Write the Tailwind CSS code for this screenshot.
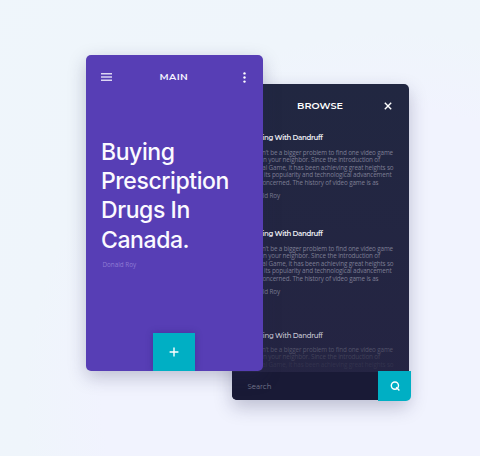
<!DOCTYPE html>
<html lang="en">
<head>
<meta charset="utf-8">
<title>Reader</title>
<script src="https://cdn.jsdelivr.net/npm/@tailwindcss/browser@4"></script>
</head>
<body class="relative w-[480px] h-[456px] overflow-hidden bg-[radial-gradient(circle_at_82%_88%,#f1f3fe_0px,#f1f3fe_290px,#eff5fb_370px,#eff6fb_600px)] font-['Montserrat','Inter',sans-serif]">

<!-- Browse screen -->
<section class="absolute left-[232px] top-[84px] w-[177px] h-[316px] rounded-[5px] bg-linear-to-b from-[#212741] to-[#252443] shadow-[0_7px_18px_rgba(40,40,80,0.26)] flex flex-col">
  <header class="flex items-center justify-between h-[43px] pl-[65px] pr-[17px]">
    <h2 class="pt-px text-[9.6px] leading-none font-semibold tracking-[0.1px] text-white whitespace-nowrap">BROWSE</h2>
    <svg class="size-[8px]" viewBox="0 0 8 8" fill="none" stroke="#fff" stroke-width="1.4"><path d="M.8 .8l6.4 6.4M7.2 .8L.8 7.2"/></svg>
  </header>
  <div class="relative h-[245px] overflow-hidden whitespace-nowrap">
    <article class="h-[96px] pt-[6px]">
      <h3 class="w-[90.5px] flex justify-end text-[7px] leading-[10px] font-semibold text-[#eeeef5] tracking-[-0.33px]">Dealing With Dandruff</h3>
      <div class="pt-[5.5px] text-[6.3px] leading-[7.65px] text-[#7d7e94] tracking-[-0.13px] font-['Open_Sans',sans-serif]">
        <p class="w-[161px] flex justify-end">can’t be a bigger problem to find one video game</p>
        <p class="w-[148px] flex justify-end">in your neighbor. Since the introduction of</p>
        <p class="w-[161.5px] flex justify-end">ital Game, it has been achieving great heights so</p>
        <p class="w-[159.5px] flex justify-end">as its popularity and technological advancement</p>
        <p class="w-[146.5px] flex justify-end">concerned. The history of video game is as</p>
        <p class="w-[48px] flex justify-end pt-[5.5px]">Donald Roy</p>
      </div>
    </article>
    <article class="h-[102.5px] pt-[6px]">
      <h3 class="w-[90.5px] flex justify-end text-[7px] leading-[10px] font-semibold text-[#eeeef5] tracking-[-0.33px]">Dealing With Dandruff</h3>
      <div class="pt-[5.5px] text-[6.3px] leading-[7.65px] text-[#7d7e94] tracking-[-0.13px] font-['Open_Sans',sans-serif]">
        <p class="w-[161px] flex justify-end">can’t be a bigger problem to find one video game</p>
        <p class="w-[148px] flex justify-end">in your neighbor. Since the introduction of</p>
        <p class="w-[161.5px] flex justify-end">ital Game, it has been achieving great heights so</p>
        <p class="w-[159.5px] flex justify-end">as its popularity and technological advancement</p>
        <p class="w-[146.5px] flex justify-end">concerned. The history of video game is as</p>
        <p class="w-[48px] flex justify-end pt-[5.5px]">Donald Roy</p>
      </div>
    </article>
    <article class="pt-[5px]">
      <h3 class="w-[90.5px] flex justify-end text-[7px] leading-[10px] font-medium text-[#c9c9d5] tracking-[-0.3px]">Dealing With Dandruff</h3>
      <div class="pt-[5px] text-[6.3px] leading-[7.65px] tracking-[-0.13px] font-['Open_Sans',sans-serif]">
        <p class="w-[161px] flex justify-end text-[#525269]">can’t be a bigger problem to find one video game</p>
        <p class="w-[148px] flex justify-end text-[#414159]">in your neighbor. Since the introduction of</p>
        <p class="w-[161.5px] flex justify-end text-[#33334e]">ital Game, it has been achieving great heights so</p>
      </div>
    </article>
  </div>
  <footer class="h-[28px] flex items-center pl-[15.5px] rounded-b-[5px] bg-[#191a36]">
    <span class="text-[7px] leading-none text-[#7b7c93]">Search</span>
  </footer>
  <button class="absolute left-[146px] top-[286.5px] w-[33px] h-[30.5px] rounded-br-[5px] bg-[#00afc4] flex items-center justify-center">
    <svg class="size-[10px]" viewBox="0 0 10 10" fill="none" stroke="#fff" stroke-width="1.4"><circle cx="4.9" cy="4.6" r="3.6"/><path d="M6.2 6.2L9.4 9.4"/></svg>
  </button>
</section>

<!-- Main screen -->
<section class="absolute left-[85.5px] top-[55px] w-[177px] h-[315.5px] rounded-[5px] overflow-hidden bg-[#573eb5] flex flex-col">
  <header class="grid grid-cols-[59px_1fr_3px] items-center h-[44px] pl-[15px] pr-[16.5px]">
    <svg class="w-[11px] h-[8px]" viewBox="0 0 11 8" fill="#dcd6f3"><path d="M0 0h11v1.5H0zM0 3.2h11v1.5H0zM0 6.4h11v1.5H0z"/></svg>
    <h1 class="text-[9.6px] leading-none font-semibold tracking-[0.4px] text-[#f6f4ff]">MAIN</h1>
    <svg class="w-[3px] h-[11px]" viewBox="0 0 3 11" fill="#fff"><circle cx="1.5" cy="1.4" r="1.2"/><circle cx="1.5" cy="5.5" r="1.2"/><circle cx="1.5" cy="9.6" r="1.2"/></svg>
  </header>
  <h2 class="pt-[39px] pl-[15.5px] text-[23px] leading-[29.2px] font-medium tracking-[-0.42px] text-[#fbfaff] whitespace-nowrap font-['Inter',sans-serif]">Buying<br>Prescription<br>Drugs In<br>Canada.</h2>
  <p class="pt-[6.5px] pl-[17px] text-[6.3px] leading-[8px] text-[#8f7bd4] font-['Open_Sans',sans-serif]">Donald Roy</p>
  <button class="mt-auto mx-auto w-[42px] h-[38px] bg-[#00afc4] shadow-[0_0_7px_rgba(35,20,100,0.3)] flex items-center justify-center">
    <svg class="size-[10px]" viewBox="0 0 10 10" stroke="#fff" stroke-width="1.4"><path d="M5 .6v8.8M.6 5h8.8"/></svg>
  </button>
</section>
<div class="absolute left-[85.5px] top-[55px] w-[177px] h-[315.5px] rounded-[5px] shadow-[0_6px_18px_rgba(40,40,80,0.26)] pointer-events-none"></div>
</body>
</html>
